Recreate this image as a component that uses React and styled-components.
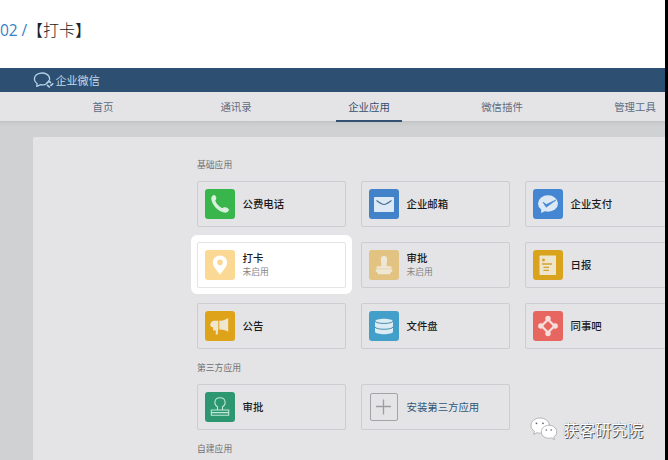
import React from "react";
import styled, { createGlobalStyle, css } from "styled-components";

const Global = createGlobalStyle`
  * { box-sizing: border-box; }
  body { margin: 0; overflow: hidden; background: #000; font-family: "Noto Sans CJK SC", sans-serif; }
`;

const Page = styled.div`
  position: relative;
  width: 665px;
  height: 460px;
  overflow: hidden;
  display: flex;
  flex-direction: column;
  background: #fff;
`;

const Title = styled.h1`
  flex: none;
  margin: 0;
  height: 68px;
  padding-top: 17px;
  font-size: 16px;
  line-height: 24px;
  font-weight: 300;
  color: #222;
  white-space: pre;
`;

const Step = styled.span`
  font-family: "Open Sans", sans-serif;
  font-weight: 400;
  font-size: 15.5px;
  letter-spacing: -0.1px;
  color: #3683c4;
`;

const TopBar = styled.header`
  flex: none;
  height: 24px;
  padding-left: 33px;
  display: flex;
  align-items: center;
  gap: 1px;
  background: #2d5072;
  color: #c6d9e9;
  font-size: 11.1px;
  line-height: 24px;
`;

const Brand = styled.span`
  padding-left: 0.4px;
`;

const Nav = styled.nav`
  flex: none;
  height: 30px;
  padding-left: 36.5px;
  display: flex;
  background: #e4e4e6;
  border-bottom: 1px solid #c2c3c5;
`;

const Tab = styled.a`
  flex: none;
  width: 133px;
  display: flex;
  justify-content: center;
`;

const TabLabel = styled.span`
  height: 30px;
  padding: 0 12px;
  font-size: 10.4px;
  line-height: 29px;
  color: ${(p) => (p.$active ? "#344f6f" : "#5c6c83")};
  border-bottom: 2.5px solid ${(p) => (p.$active ? "#335272" : "transparent")};
`;

const Backdrop = styled.div`
  flex: 1;
  min-height: 0;
  padding: 15px 0 0 33px;
  background: linear-gradient(#c8c9cb, #d0d1d3 5px);
`;

const Panel = styled.main`
  height: 330px;
  padding: 20px 0 0 164px;
  background: #e4e4e6;
  border-radius: 2px 0 0 0;
`;

const SectionTitle = styled.h2`
  margin: 0;
  height: 24px;
  font-size: 8.8px;
  line-height: 16px;
  font-weight: 400;
  color: #707072;
`;

const Grid = styled.section`
  display: grid;
  grid-template-columns: repeat(3, 149px);
  grid-auto-rows: 46px;
  gap: 15px;
  margin-bottom: 11px;
`;

const Card = styled.div`
  display: flex;
  align-items: center;
  gap: 7.5px;
  padding-left: 7px;
  border: 1px solid #cbcdd0;
  border-radius: 2px;
  ${(p) =>
    p.$highlight &&
    css`
      background: #fff;
      border-color: #e3e4e6;
      box-shadow: 0 0 0 5px #fff, 0 -1px 0 6px #fff, 0 0 0 6px #fff;
    `}
`;

const IconTile = styled.div`
  flex: none;
  width: 30px;
  height: 30px;
  border-radius: 3px;
  background: ${(p) => p.$color};
  svg { display: block; }
`;

const Texts = styled.div`
  display: flex;
  flex-direction: column;
  padding-bottom: 2px;
`;

const Name = styled.span`
  font-size: 10.4px;
  line-height: 15px;
  font-weight: ${(p) => (p.$link ? 400 : 500)};
  color: ${(p) => (p.$link ? "#315777" : "#1a1a1c")};
`;

const Status = styled.span`
  font-size: 8.8px;
  line-height: 14px;
  color: #858587;
`;

const Watermark = styled.div`
  position: absolute;
  left: 530px;
  top: 416px;
  display: flex;
  align-items: center;
  gap: 5px;
  font-size: 16px;
  line-height: 26px;
  color: #fff;
  text-shadow: 1px 1px 0 #58585a, 0 0 1px #77777a;
`;

const Logo = () => (
  <svg width="21" height="18" viewBox="0 0 21 18" fill="none" stroke="#b5d0e8" strokeWidth="1.3" strokeLinecap="round" strokeLinejoin="round">
    <path d="M12.500 13.300c-1.600.6-3 .7-4.700.4L3.700 15.300l.4-2.800C-.2 9.500.8 3.600 6.600 2.300c5.300-1.200 10 1.500 10 5.700v.7" />
    <path d="M15.800 9.800l1.700 1.700M19.700 12.800l-1.800 1.600M16.300 16l-1.800-1.700M13.500 12.500l1.600-1.700" strokeWidth="1.700" />
  </svg>
);

const glyphs = {
  phone: (
    <path d="M8.300 6.200c1.500-.8 3.300 1.300 3 3.600-.1 1-1.200 1.400-.9 2.200 1.200 3.100 3.500 5.500 6.600 6.900.9.300 1.300-.7 2.200-.7 2.400-.2 5.200 1.500 4.700 3-.6 1.900-2.700 2.800-4.900 2.400C12.800 22.100 7.400 16.600 6.300 10.300c-.3-1.600.5-3.300 2-4.100z" fill="#d8f0db" />
  ),
  pin: (
    <path fillRule="evenodd" d="M15 5.500c-4 0-7.100 3-7.100 6.900 0 4.800 4.400 7.900 7.100 12.300 2.700-4.400 7.100-7.500 7.100-12.300 0-3.900-3.100-6.900-7.100-6.900zm0 4.100a2.800 2.800 0 1 1 0 5.600 2.800 2.800 0 0 1 0-5.600z" fill="#fff" />
  ),
  mail: (
    <>
      <rect x="5" y="8" width="20" height="15" rx=".7" fill="#dce8f4" />
      <path d="M7.500 11.500c2.300 1.600 5 3.800 7.500 4 2.500-.2 5.200-2.400 7.500-4" fill="none" stroke="#486f99" strokeWidth="1.100" />
    </>
  ),
  stamp: (
    <g fill="#eee7d6">
      <path d="M11.800 9.500c0-5 6.400-5 6.400 0 0 2-.8 3.500-.5 6.700h4.700v2.500H7.600v-2.500h4.700c.3-3.200-.5-4.700-.5-6.700z" />
      <path d="M7 19.300h16l.4 2.400-1.400.3-1 2.300H9l-1-2.300-1.400-.3z" />
    </g>
  ),
  pay: (
    <>
      <ellipse cx="15" cy="14.500" rx="10" ry="8.200" fill="#dce8f4" />
      <path d="M8.500 19l-.5 5 5-2.300z" fill="#dce8f4" />
      <path d="M10 13.200l3.400 2.300 9.500-4.500-9.700 7.200z" fill="#4486d1" stroke="#4486d1" strokeWidth=".7" />
    </>
  ),
  report: (
    <>
      <rect x="6.500" y="5.500" width="16.500" height="19.500" rx=".7" fill="#eee5ce" />
      <path d="M9 14h10M10.500 17.300h5.500M10.500 20.300h5.500" stroke="#d6a22a" strokeWidth="1.300" />
      <circle cx="10.500" cy="10" r="1.500" fill="#d6a22a" />
    </>
  ),
  horn: (
    <g fill="#efe6cf">
      <path d="M13.300 9.800v9.700H9c-.6 0-1-.4-1-1v-2.300c-3.400 0-3.300-3.500-1.500-5.200.7-.8 1.500-1.200 2.500-1.200z" />
      <path d="M14.300 9.800c3 0 5.500-.8 8.900-2.800v13.700c-3.400-1.800-5.900-2.200-8.900-2.200z" />
      <path d="M10.800 19h2v4.500h-2z" />
    </g>
  ),
  disk: (
    <>
      <path d="M6 10.500c0-3.700 18-3.700 18 0v10c0 3.600-18 3.600-18 0z" fill="#dcecf4" />
      <path d="M6 10.200c1.500 3 16.500 3 18 0M6 16c1.500 3 16.500 3 18 0" fill="none" stroke="#4c8dad" strokeWidth="1" />
    </>
  ),
  ring: (
    <g fill="#f5dfdc">
      <circle cx="15" cy="7.500" r="2.700" />
      <circle cx="7.800" cy="15" r="2.700" />
      <circle cx="22.200" cy="15" r="2.700" />
      <circle cx="15" cy="22.500" r="2.700" />
      <path d="M15 8.500l6.500 6.500-6.500 6.500-6.500-6.500z" fill="none" stroke="#f5dfdc" strokeWidth="2.200" />
    </g>
  ),
  seal: (
    <path d="M6.300 18h17.400v5.200H6.300zM6.500 20.600h17M12.500 18v-3.200c-2.300-1.400-2.900-3.300-2.500-5.300.7-5 9.300-5 10 0 .4 2-.2 3.900-2.500 5.300V18" fill="none" stroke="#bfe8d6" strokeWidth="1.100" />
  ),
  plus: (
    <>
      <rect x="1.500" y="1.500" width="27" height="27" rx="1.500" fill="none" stroke="#a2a4a7" strokeWidth="1" />
      <path d="M14.500 7.500v15M7 14.500h15" stroke="#9b9da0" strokeWidth="1.300" />
    </>
  ),
};

const Glyph = ({ name }) => (
  <svg width="30" height="30" viewBox="0 0 30 30">{glyphs[name]}</svg>
);

const WeChat = () => (
  <svg width="28" height="24" viewBox="0 0 28 24">
    <g fill="#fff" stroke="#8c8d90" strokeWidth=".6">
      <path d="M10 1C5 1 1 4.300 1 8.500c0 2.500 1.400 4.500 3.500 5.900l-.9 2.900 3.300-1.600c4.200 1.300 12 .2 12.400-7.300C19.100 4.100 15.200 1 10 1z" />
      <path d="M19 8.300c-4.400 0-7.700 2.900-7.700 6.600 0 4.500 4.900 7.300 10 6l3 1.800-.6-2.700c2-1.300 3-3.100 3-5.100 0-3.700-3.300-6.600-7.700-6.600z" />
    </g>
    <g fill="#666">
      <circle cx="6.500" cy="6.300" r=".9" />
      <circle cx="13" cy="6.300" r=".9" />
      <circle cx="16.300" cy="13" r=".8" />
      <circle cx="21.200" cy="13" r=".8" />
    </g>
  </svg>
);

const tabs = ["首页", "通讯录", "企业应用", "微信插件", "管理工具"];

const basicApps = [
  { name: "公费电话", icon: "phone", color: "#38b54b" },
  { name: "企业邮箱", icon: "mail", color: "#4282c8" },
  { name: "企业支付", icon: "pay", color: "#4486d1" },
  { name: "打卡", status: "未启用", icon: "pin", color: "#fbd894", highlight: true },
  { name: "审批", status: "未启用", icon: "stamp", color: "#e2c382" },
  { name: "日报", icon: "report", color: "#d9a31d" },
  { name: "公告", icon: "horn", color: "#dfa31a" },
  { name: "文件盘", icon: "disk", color: "#429fca" },
  { name: "同事吧", icon: "ring", color: "#e76660" },
];

const thirdPartyApps = [
  { name: "审批", icon: "seal", color: "#2c9771" },
  { name: "安装第三方应用", icon: "plus", color: "transparent", link: true },
];

const AppCard = ({ app }) => (
  <Card $highlight={app.highlight}>
    <IconTile $color={app.color}>
      <Glyph name={app.icon} />
    </IconTile>
    <Texts>
      <Name $link={app.link}>{app.name}</Name>
      {app.status && <Status>{app.status}</Status>}
    </Texts>
  </Card>
);

export default function App() {
  return (
    <Page>
      <Global />
      <Title><Step>02 /</Step>【打卡】</Title>
      <TopBar>
        <Logo />
        <Brand>企业微信</Brand>
      </TopBar>
      <Nav>
        {tabs.map((t) => (
          <Tab key={t}>
            <TabLabel $active={t === "企业应用"}>{t}</TabLabel>
          </Tab>
        ))}
      </Nav>
      <Backdrop>
        <Panel>
          <SectionTitle>基础应用</SectionTitle>
          <Grid>
            {basicApps.map((a) => <AppCard key={a.name} app={a} />)}
          </Grid>
          <SectionTitle>第三方应用</SectionTitle>
          <Grid>
            {thirdPartyApps.map((a) => <AppCard key={a.name} app={a} />)}
          </Grid>
          <SectionTitle>自建应用</SectionTitle>
        </Panel>
      </Backdrop>
      <Watermark>
        <WeChat />
        <span>获客研究院</span>
      </Watermark>
    </Page>
  );
}
